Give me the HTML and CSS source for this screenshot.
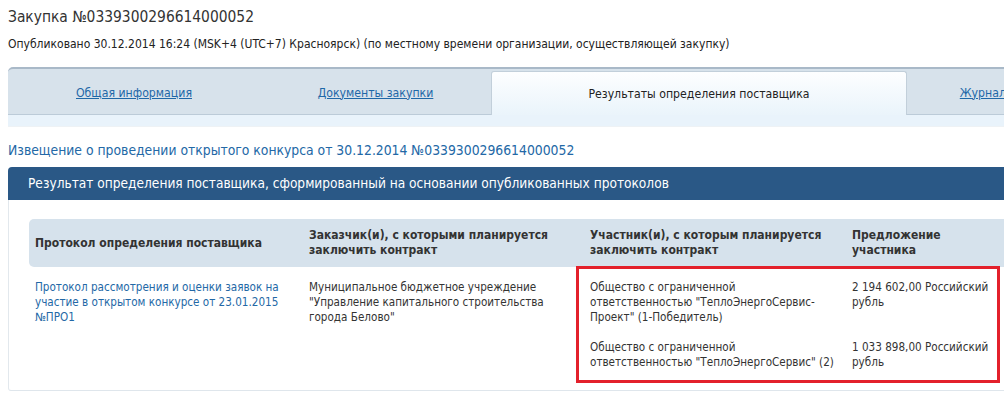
FILE: index.html
```html
<!DOCTYPE html>
<html>
	<head>
		<meta charset="utf-8">
		<title>Закупка №0339300296614000052</title>
		<link rel="stylesheet" href="styles.css">
	</head>
	<body>
		<div class="page">
			<h1 class="title">Закупка №0339300296614000052</h1>
			<p class="published">Опубликовано 30.12.2014 16:24 (MSK+4 (UTC+7) Красноярск) (по местному времени организации, осуществляющей закупку)</p>

			<div class="tabs">
				<ul class="tab-row">
					<li class="tab tab-1"><a href="">Общая информация</a></li>
					<li class="tab tab-2"><a href="">Документы закупки</a></li>
					<li class="tab tab-3 active">Результаты определения поставщика</li>
					<li class="tab tab-4"><a href="">Журнал событий</a></li>
				</ul>
				<div class="tab-strip"></div>
			</div>

			<a class="notice" href="">Извещение о проведении открытого конкурса от 30.12.2014 №0339300296614000052</a>

			<div class="block">
				<div class="block-head">Результат определения поставщика, сформированный на основании опубликованных протоколов</div>
				<div class="block-body">
					<div class="results">
						<div class="row head">
							<div class="cell c1">Протокол определения поставщика</div>
							<div class="cell c2">Заказчик(и), с которыми планируется заключить контракт</div>
							<div class="cell c3">Участник(и), с которым планируется заключить контракт</div>
							<div class="cell c4">Предложение участника</div>
						</div>
						<div class="row body">
							<div class="cell c1"><a href="">Протокол рассмотрения и оценки заявок на участие в открытом конкурсе от 23.01.2015 №ПРО1</a></div>
							<div class="cell c2">Муниципальное бюджетное учреждение "Управление капитального строительства города Белово"</div>
							<div class="participants">
								<div class="participant">
									<div class="cell c3">Общество с ограниченной<br>ответственностью "ТеплоЭнергоСервис-Проект" (1-Победитель)</div>
									<div class="cell c4">2 194 602,00 Российский рубль</div>
								</div>
								<div class="participant">
									<div class="cell c3">Общество с ограниченной<br>ответственностью "ТеплоЭнергоСервис" (2)</div>
									<div class="cell c4">1 033 898,00 Российский рубль</div>
								</div>
							</div>
						</div>
						<div class="highlight"></div>
					</div>
				</div>
			</div>
		</div>
	</body>
</html>
```

FILE: styles.css
```css
*{margin: 0;padding: 0;}
ul,ol li{list-style: none;}
body{
	background: #fff;
	font-family: "DejaVu Sans Condensed", "DejaVu Sans", sans-serif;
	color: #333;
}
html{overflow: hidden;}
.page{
	width: 1120px;
	padding: 7px 0 0 8px;
}
.title{
	font-size: 15.4px;
	font-weight: normal;
	line-height: 20px;
	color: #333;
}
.published{
	margin-top: 10px;
	font-size: 12px;
	line-height: 14px;
	color: #222;
}
.tabs{
	margin-top: 16px;
	border-top: 2px solid #a9b9c8;
	border-radius: 5px 0 0 0;
	background: #d7e2eb;
}
.tab-row{
	display: flex;
	height: 43px;
	padding-top: 2px;
	border-bottom: 1px solid #bccbd8;
	box-sizing: content-box;
}
.tab{
	display: flex;
	align-items: center;
	justify-content: center;
	font-size: 12.2px;
	color: #222;
	white-space: nowrap;
}
.tab a{color: #1f68a8;}
.tab-1{width: 252px;}
.tab-2{width: 231px;}
.tab-3{width: 414px;}
.tab-4{width: 204px;}
.tab.active{
	margin-bottom: -1px;
	border: 1px solid #c2cfda;
	border-bottom: none;
	border-radius: 3px 3px 0 0;
	background: linear-gradient(#fdfeff, #eaf4fb);
}
.tab-strip{
	height: 11px;
	background: #e9f3fb;
	border-bottom: 1px solid #eef2f5;
}
.notice{
	display: block;
	margin-top: 14px;
	font-size: 13.8px;
	line-height: 18px;
	color: #2368a6;
	text-decoration: none;
}
.block{
	margin-top: 8px;
}
.block-head{
	height: 33px;
	line-height: 33px;
	padding-left: 20px;
	border-radius: 4px 0 0 0;
	background: #2a5886;
	color: #fff;
	font-size: 13.6px;
}
.block-body{
	padding: 19px 0 6px 20px;
	border-left: 1px solid #e2e8ed;
	border-bottom: 1px solid #dfe6ec;
	border-radius: 0 0 0 3px;
}
.results{
	position: relative;
}
.row{
	display: flex;
	font-size: 11.6px;
	line-height: 15px;
}
.row.head{
	height: 48px;
	align-items: center;
	background: #d6e2ec;
	border-radius: 5px;
	font-weight: bold;
	font-size: 12px;
	color: #333;
}
.row.body{
	padding: 13px 0 14px;
	color: #333;
}
.cell{
	padding-left: 6px;
	box-sizing: border-box;
}
.c1{width: 274px;}
.c2{width: 281px;}
.c3{width: 262px;}
.c4{width: 160px; padding-right: 8px;}
.c1 a{
	color: #2368a6;
	text-decoration: none;
}
.c2{padding-right: 16px;}
.c3{padding-right: 6px;}
.participant{
	display: flex;
	margin-bottom: 15px;
}
.participant:last-child{margin-bottom: 0;}
.highlight{
	position: absolute;
	left: 547px;
	top: 47px;
	width: 424px;
	height: 117px;
	border: 3px solid #e3202b;
	box-sizing: border-box;
}
```
